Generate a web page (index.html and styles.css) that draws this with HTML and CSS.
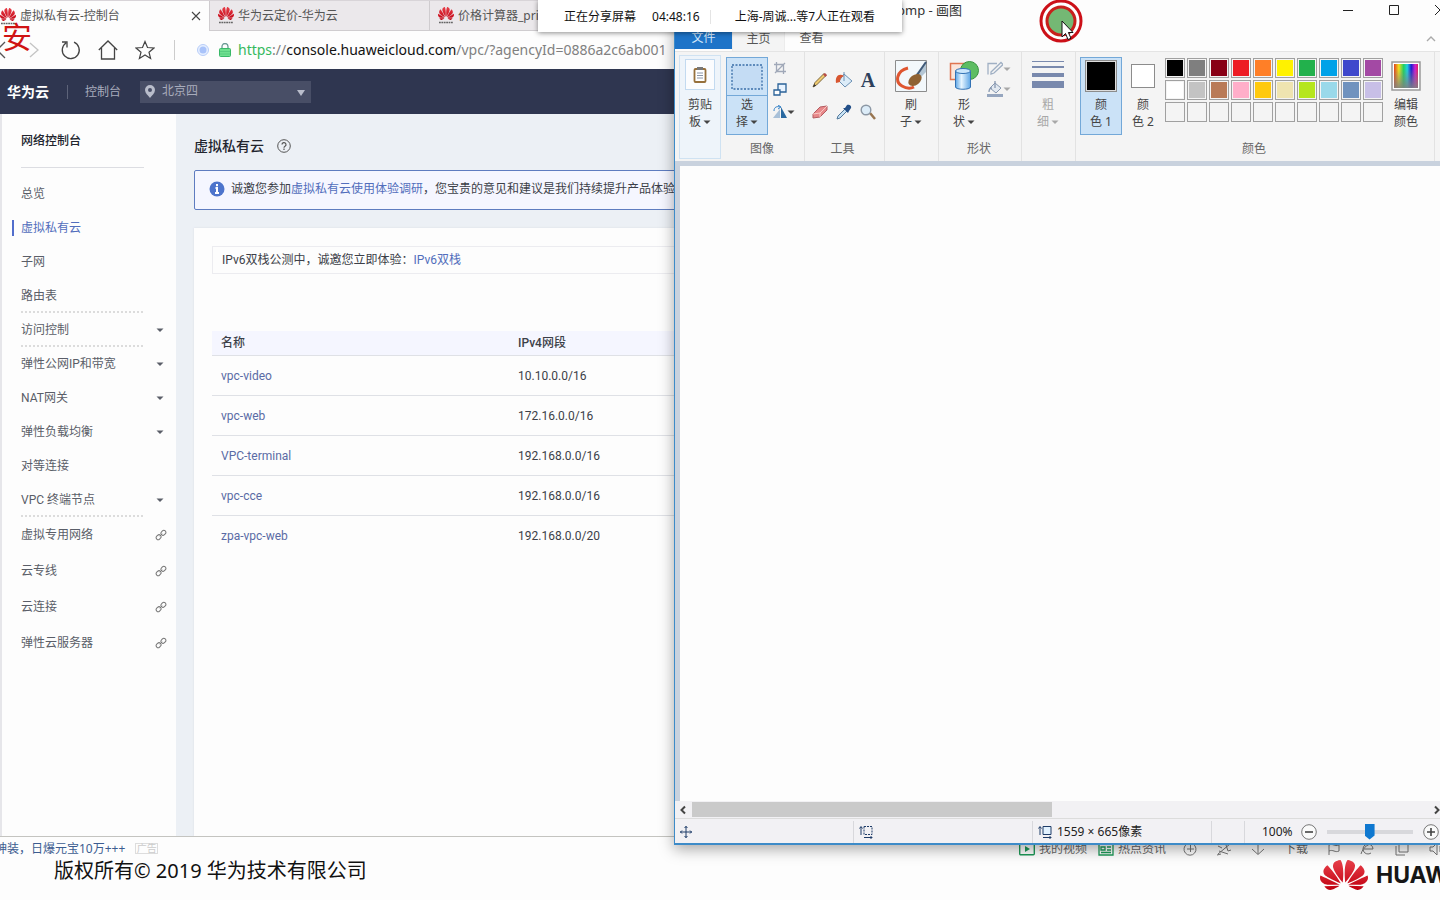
FILE: index.html
```html
<!DOCTYPE html>
<html lang="zh-CN">
<head>
<meta charset="utf-8">
<title>虚拟私有云-控制台</title>
<link rel="stylesheet" href="styles.css">
</head>
<body>
<svg class="defs" aria-hidden="true">
  <defs>
    <linearGradient id="red" x1="0" y1="0" x2="0" y2="1"><stop offset="0" stop-color="#e8404a"/><stop offset="1" stop-color="#c00010"/></linearGradient>
    <linearGradient id="rainbow"><stop offset="0" stop-color="#e04020"/><stop offset=".2" stop-color="#f0e020"/><stop offset=".4" stop-color="#20d060"/><stop offset=".55" stop-color="#20d0e0"/><stop offset=".72" stop-color="#2020d0"/><stop offset=".88" stop-color="#d020d0"/><stop offset="1" stop-color="#e02060"/></linearGradient>
    <linearGradient id="fade" x1="0" y1="0" x2="0" y2="1"><stop offset=".2" stop-color="#808080" stop-opacity="0"/><stop offset="1" stop-color="#808080" stop-opacity=".9"/></linearGradient>
    <linearGradient id="cyl"><stop offset="0" stop-color="#5ea6e6"/><stop offset=".4" stop-color="#e6f5ff"/><stop offset="1" stop-color="#5ea6e6"/></linearGradient>
    <symbol id="flower" viewBox="0 2.9 24 18.2" preserveAspectRatio="none">
      <path d="M3.67 6.14S1.82 7.91 1.72 9.78v.35c.08 1.51 1.22 2.4 1.22 2.4 1.83 1.79 6.26 4.04 7.3 4.55 0 0 .06.03.1-.01l.02-.04v-.04C7.52 10.8 3.67 6.14 3.67 6.14zM9.65 18.6c-.02-.08-.1-.08-.1-.08l-7.38.26c.8 1.43 2.15 2.53 3.56 2.2.96-.25 3.16-1.78 3.88-2.3.06-.05.04-.09.04-.09zm.08-.78C6.49 15.63.21 12.28.21 12.28c-.15.46-.2.9-.21 1.3v.07c0 1.07.4 1.82.4 1.82.8 1.69 2.34 2.2 2.34 2.2.7.3 1.4.31 1.4.31.12.02 4.4 0 5.54 0 .05 0 .08-.05.08-.05v-.06c0-.03-.03-.05-.03-.05zM9.06 3.19a3.42 3.42 0 00-2.57 3.15v.41c.03.6.16 1.05.16 1.05.66 2.9 3.86 7.65 4.55 8.65.05.05.1.03.1.03a.1.1 0 00.06-.1c1.06-10.6-1.11-13.42-1.11-13.42-.32.02-1.19.23-1.19.23zm8.3 2.27s-.49-1.8-2.44-2.28c0 0-.57-.14-1.17-.22 0 0-2.18 2.81-1.12 13.43.01.07.06.08.06.08.07.03.1-.03.1-.03.72-1.03 3.9-5.76 4.55-8.64 0 0 .36-1.4.02-2.34zm-2.92 13.07s-.07 0-.09.05c0 0-.01.07.03.1.7.51 2.85 2 3.88 2.3 0 0 .16.05.43.06h.14c.69-.02 1.9-.37 3-2.26l-7.4-.25zm7.83-8.41c.14-2.06-1.94-3.97-1.94-3.98 0 0-3.85 4.66-6.67 10.8 0 0-.03.08.02.13l.04.01h.06c1.06-.53 5.46-2.77 7.28-4.54 0 0 1.15-.93 1.21-2.42zm1.52 2.14s-6.28 3.37-9.52 5.55c0 0-.05.04-.03.11 0 0 .03.06.07.06 1.16 0 5.56 0 5.67-.02 0 0 .57-.02 1.27-.29 0 0 1.56-.5 2.37-2.27 0 0 .73-1.45.17-3.14z" fill="url(#red)"/>
    </symbol>
    <symbol id="favicon" viewBox="0 0 16 17">
      <use href="#flower" width="16" height="13"/>
      <path d="M1 15.500h14" stroke="#666" stroke-width="1.600" stroke-dasharray="1.800 .600"/>
    </symbol>
    <symbol id="down" viewBox="0 0 8 8"><path d="M.500 2.500h7L4 6z" fill="currentColor"/></symbol>
    <symbol id="link" viewBox="0 0 12 12"><g fill="none" stroke="#777" stroke-width="1"><rect x="-2.600" y="-2" width="5.200" height="4" rx="2" transform="translate(3.600 8.200) rotate(-45)"/><rect x="-2.600" y="-2" width="5.200" height="4" rx="2" transform="translate(8.400 3.800) rotate(-45)"/><path d="M4.800 7.200l2.400-2.400"/></g></symbol>
  </defs>
</svg>

<div class="browser">
  <div class="tabs">
    <div class="tab active"><svg class="fav"><use href="#favicon"/></svg><span>虚拟私有云-控制台</span>
      <button class="plain close" aria-label="关闭标签"><svg width="10" height="10" viewBox="0 0 10 10"><path d="M1 1l8 8M9 1L1 9" stroke="#444" stroke-width="1.100"/></svg></button></div>
    <div class="tab"><svg class="fav"><use href="#favicon"/></svg><span>华为云定价-华为云</span></div>
    <div class="tab"><svg class="fav"><use href="#favicon"/></svg><span>价格计算器_price</span></div>
  </div>
  <div class="toolbar">
    <button class="plain" aria-label="后退"><svg width="10" height="20" viewBox="0 0 10 20"><path d="M5 2L-3 10l8 8" fill="none" stroke="#555" stroke-width="1.300"/></svg></button>
    <button class="plain fwd" aria-label="前进"><svg width="12" height="20" viewBox="0 0 12 20"><path d="M2 3l8 7-8 7" fill="none" stroke="#c4c4c4" stroke-width="1.300"/></svg></button>
    <button class="plain" aria-label="刷新"><svg width="20" height="20" viewBox="0 0 20 20"><path d="M13 2.200A8.500 8.500 0 1 1 5 3M1 2h5v5.500" fill="none" stroke="#444" stroke-width="1.300"/></svg></button>
    <button class="plain" aria-label="主页"><svg width="20" height="20" viewBox="0 0 20 20"><path d="M.800 10L10 1l9.200 9M3.500 8v11h13V8" fill="none" stroke="#444" stroke-width="1.300"/></svg></button>
    <button class="plain" aria-label="收藏"><svg width="20" height="20" viewBox="0 0 20 20"><path d="M10 1.500l2.500 6 6.500.500-5 4.200 1.600 6.300L10 15l-5.600 3.500L6 12.200 1 8l6.500-.500z" fill="none" stroke="#444" stroke-width="1.200"/></svg></button>
    <span class="rule"></span>
    <svg class="site" width="12" height="12" viewBox="0 0 12 12"><circle cx="6" cy="6" r="5.500" fill="#e6efff" stroke="#b8cdf8"/><circle cx="6" cy="6" r="3.500" fill="#a9c3fa"/></svg>
    <svg class="lock" width="12" height="14" viewBox="0 0 12 14"><path d="M3 6V3.500a3 3 0 0 1 6 0V6" fill="none" stroke="#6a9a94" stroke-width="1.300"/><rect x=".5" y="5.500" width="11" height="8" rx="1" fill="#6fe08f" stroke="#38b868"/><path d="M1 8.500h10M1 11h10" stroke="#58cc80"/></svg>
    <div class="url"><span class="safe">https</span>://<b>console.huaweicloud.com</b>/vpc/?agencyId=0886a2c6ab001</div>
  </div>
  <header class="top">
    <a class="brand" href="#">华为云</a><span class="bar"></span><a href="#" class="console">控制台</a>
    <div class="region">
      <svg class="pin" width="10" height="13" viewBox="0 0 10 13"><path d="M5 0a5 5 0 0 1 5 5c0 3-3 5.500-5 8-2-2.500-5-5-5-8a5 5 0 0 1 5-5zm0 3a2 2 0 1 0 0 4 2 2 0 0 0 0-4z" fill="#b9bdcb"/></svg>
      <select aria-label="区域"><option>北京四</option></select>
      <svg class="tri" width="8" height="6" viewBox="0 0 8 6"><path d="M0 0h8L4 6z" fill="#b9bdcb"/></svg>
    </div>
  </header>
  <div class="body">
    <nav class="side">
      <h2>网络控制台</h2>
      <ul>
        <li><a href="#">总览</a></li>
        <li class="on"><a href="#">虚拟私有云</a></li>
        <li><a href="#">子网</a></li>
        <li class="dash"><a href="#">路由表</a></li>
        <li class="dash"><a href="#">访问控制</a><svg width="8" height="8"><use href="#down"/></svg></li>
        <li><a href="#">弹性公网IP和带宽</a><svg width="8" height="8"><use href="#down"/></svg></li>
        <li><a href="#">NAT网关</a><svg width="8" height="8"><use href="#down"/></svg></li>
        <li><a href="#">弹性负载均衡</a><svg width="8" height="8"><use href="#down"/></svg></li>
        <li><a href="#">对等连接</a></li>
        <li class="dash"><a href="#">VPC 终端节点</a><svg width="8" height="8"><use href="#down"/></svg></li>
      </ul>
      <ul class="ext">
        <li><a href="#">虚拟专用网络</a><svg width="12" height="12"><use href="#link"/></svg></li>
        <li><a href="#">云专线</a><svg width="12" height="12"><use href="#link"/></svg></li>
        <li><a href="#">云连接</a><svg width="12" height="12"><use href="#link"/></svg></li>
        <li><a href="#">弹性云服务器</a><svg width="12" height="12"><use href="#link"/></svg></li>
      </ul>
    </nav>
    <main>
      <h1>虚拟私有云 <svg width="14" height="14" viewBox="0 0 14 14"><circle cx="7" cy="7" r="6.300" fill="none" stroke="#555"/><path d="M5 5.600a2 2 0 1 1 3 1.700c-.700.400-1 .700-1 1.500M7 9.600v1.300" fill="none" stroke="#555" stroke-width="1.200"/></svg></h1>
      <div class="alert"><svg width="16" height="16" viewBox="0 0 16 16"><circle cx="8" cy="8" r="7.500" fill="#4d74cc"/><path d="M8 3v2.200M6.500 7H8v5M6 12h4" stroke="#fff" stroke-width="2" fill="none"/></svg><p>诚邀您参加<a href="#">虚拟私有云使用体验调研</a>，您宝贵的意见和建议是我们持续提升产品体验</p></div>
      <section class="card">
        <p class="notice">IPv6双栈公测中，诚邀您立即体验：<a href="#">IPv6双栈</a></p>
        <table>
          <thead><tr><th>名称</th><th>IPv4网段</th></tr></thead>
          <tbody>
            <tr><td><a href="#">vpc-video</a></td><td>10.10.0.0/16</td></tr>
            <tr><td><a href="#">vpc-web</a></td><td>172.16.0.0/16</td></tr>
            <tr><td><a href="#">VPC-terminal</a></td><td>192.168.0.0/16</td></tr>
            <tr><td><a href="#">vpc-cce</a></td><td>192.168.0.0/16</td></tr>
            <tr><td><a href="#">zpa-vpc-web</a></td><td>192.168.0.0/20</td></tr>
          </tbody>
        </table>
      </section>
    </main>
  </div>
  <div class="bstatus">
    <a class="ad" href="#">神装，日爆元宝10万+++</a><span class="adtag">广告</span>
    <div class="tools">
      <span class="feed"><svg width="16" height="14" viewBox="0 0 16 14"><rect x=".7" y=".7" width="14.600" height="12" rx="1" fill="none" stroke="#1e9a58" stroke-width="1.400"/><path d="M6 4l5 3-5 3z" fill="#1e9a58"/></svg>我的视频</span>
      <span class="feed news"><svg width="16" height="14" viewBox="0 0 16 14"><path d="M1 1h14v12H1zM3 5h4v3H3zM9 5h4M9 8h4M3 10.500h10" fill="none" stroke="#1e9a58" stroke-width="1.300"/></svg>热点资讯</span>
      <svg width="16" height="14" viewBox="0 0 16 14"><path d="M11 2a6 6 0 1 1-6 0M5 7h7M8.500 3v7" /></svg>
      <svg width="16" height="14" viewBox="0 0 16 14"><path d="M2 12L14 2M2 4l4 2M3 9l9 3M10 3l2 6 3-1M1 13l4-1"/></svg>
      <svg width="16" height="14" viewBox="0 0 16 14"><path d="M8 0v12M2 7l6 5.500L14 7"/></svg>
      <span>下载</span>
      <svg width="16" height="14" viewBox="0 0 16 14"><path d="M3 13V3c4-2 5 2 10 0v6c-4 2-6-2-10 0"/></svg>
      <svg width="16" height="14" viewBox="0 0 16 14"><path d="M4 7h9A5 5 0 1 0 11 11M1 12C3 5 9 1 14 2"/></svg>
      <svg width="16" height="14" viewBox="0 0 16 14"><path d="M5 1h9v9H5zM2 4v9h9"/></svg>
      <svg width="16" height="14" viewBox="0 0 16 14"><path d="M2 5h3l4-4v12L5 9H2zM12 4v6"/></svg>
    </div>
  </div>
  <footer>
    <p>版权所有© 2019 华为技术有限公司</p>
    <div class="huawei"><svg width="48" height="30"><use href="#flower" width="48" height="30"/></svg><span>HUAWEI</span></div>
  </footer>
</div>

<section class="paint">
  <div class="title"><span>bmp - 画图</span>
    <div class="win">
      <button class="plain" aria-label="最小化"><svg width="12" height="12" viewBox="0 0 12 12"><path d="M1 6.500h10" stroke="#222"/></svg></button>
      <button class="plain" aria-label="最大化"><svg width="12" height="12" viewBox="0 0 12 12"><path d="M1.500 1.500h9v9h-9z" fill="none" stroke="#222"/></svg></button>
      <button class="plain" aria-label="关闭"><svg width="12" height="12" viewBox="0 0 12 12"><path d="M1 1l10 10M11 1L1 11" stroke="#222"/></svg></button>
    </div>
  </div>
  <div class="ptabs">
    <button class="file">文件</button><button class="home">主页</button><button>查看</button>
    <svg class="fold" width="10" height="8" viewBox="0 0 10 8"><path d="M1 6l4-4 4 4" fill="none" stroke="#aaa" stroke-width="1.400"/></svg>
  </div>
  <div class="ribbon">
    <div class="group clip">
      <button class="big"><span class="pic board"><svg width="16" height="18" viewBox="0 0 16 18"><rect x="2.500" y="3" width="11" height="13" rx="1" fill="#fff" stroke="#96703c" stroke-width="1.800"/><path d="M5 1h6v3H5z" fill="#777"/><path d="M5 7h6M5 9.500h6M5 12h6" stroke="#8a96a8"/></svg></span><span>剪贴<br>板<svg width="8" height="8"><use href="#down"/></svg></span></button>
    </div>
    <div class="group image">
      <div class="tools-row">
        <button class="big pressed split"><span class="pic"><svg width="32" height="26" viewBox="0 0 32 26"><rect x="1" y="1" width="30" height="24" fill="#c4dcf4" stroke="#3a6ea8" stroke-width="1.300" stroke-dasharray="2 1.500"/></svg></span><span>选<br>择<svg width="8" height="8"><use href="#down"/></svg></span></button>
        <div class="minis">
          <button class="plain" aria-label="裁剪"><svg width="14" height="14" viewBox="0 0 14 14"><path d="M3.500 1v9.500H13M1 3.500h9.500V13M2 12L12 2" fill="none" stroke="#a0a8b8" stroke-width="1.300"/></svg></button>
          <button class="plain" aria-label="重新调整大小"><svg width="14" height="14" viewBox="0 0 14 14"><path d="M5 1h8v8H5z" fill="#e8f3ff" stroke="#2a6298" stroke-width="1.300"/><path d="M1 7h6v5H1z" fill="#fff" stroke="#2a6298" stroke-width="1.300"/></svg></button>
          <button class="plain" aria-label="旋转"><svg width="14" height="14" viewBox="0 0 14 14"><path d="M7 4v9H0z" fill="#a8c0d8"/><path d="M8 2l6 11H8z" fill="#2868a0"/><path d="M1 6c0-4 3-5 6-4M5 0l3 2-3 2" fill="none" stroke="#3080c8"/></svg><svg width="8" height="8"><use href="#down"/></svg></button>
        </div>
      </div>
      <h3>图像</h3>
    </div>
    <div class="group tool">
      <div class="grid">
        <button class="plain" aria-label="铅笔"><svg width="16" height="16" viewBox="0 0 16 16"><path d="M1 15l2-4.500L12 1.500l2 2-9.500 9.500z" fill="#f0cb70" stroke="#7d683e"/><path d="M1 15l1.300-3 1.800 1.800z" fill="#333"/><path d="M11 2.500l2.500 2.500 1.500-2L13 1z" fill="#b84d48"/></svg></button>
        <button class="plain" aria-label="填充"><svg width="18" height="18" viewBox="0 0 18 18"><path d="M9 3l8 7-7 6-6-6z" fill="#dcecf8" stroke="#6b90b4"/><path d="M9 10V1" stroke="#6b90b4"/><path d="M1 12C0 5 4 2 9 5 6 6 5 8 5 11z" fill="#d85630"/></svg></button>
        <button class="plain letter" aria-label="文本">A</button>
        <button class="plain" aria-label="橡皮擦"><svg width="16" height="14" viewBox="0 0 16 14"><path d="M1 9l7-7 7-1v4l-7 7-7 1z" fill="#e8888a" stroke="#b45c60"/><path d="M1 9l7-1 7-7M8 8v4" fill="none" stroke="#f9c8c4"/></svg></button>
        <button class="plain" aria-label="颜色选取器"><svg width="16" height="16" viewBox="0 0 16 16"><path d="M1 15l1-3 7-7 2 2-7 7z" fill="#c8e2f5" stroke="#52799c"/><path d="M7 4l5 5 1-2 2-3c1-2-2-4-4-3L9 4z" fill="#234f88"/></svg></button>
        <button class="plain" aria-label="放大镜"><svg width="16" height="16" viewBox="0 0 16 16"><path d="M10 9l5 6" stroke="#987550" stroke-width="2.500"/><circle cx="6" cy="6" r="4.800" fill="#dcecf8" stroke="#8c97a4" stroke-width="1.400"/></svg></button>
      </div>
      <h3>工具</h3>
    </div>
    <div class="group brush">
      <button class="big"><span class="pic"><svg width="32" height="32" viewBox="0 0 32 32"><path d="M.5.5h31v31H.5z" fill="#f3f8fb" stroke="#8c8c8c"/><path d="M13 8C1 11 0 22 7 26c5 3 8 3 12 1" fill="none" stroke="#df5630" stroke-width="3"/><path d="M31 1v11l-6 6-4-4z" fill="#b4c6d4"/><path d="M31 2L22 15" stroke="#415a78" stroke-width="2"/><ellipse cx="20" cy="20" rx="7.500" ry="5" transform="rotate(-38 20 20)" fill="#8f6232"/></svg></span><span>刷<br>子<svg width="8" height="8"><use href="#down"/></svg></span></button>
    </div>
    <div class="group shape">
      <div class="tools-row">
        <button class="big"><span class="pic"><svg width="32" height="32" viewBox="0 0 32 32"><path d="M2.500 3.500h16v16h-16z" fill="#fae5db" stroke="#df7550" stroke-width="1.500"/><circle cx="21.500" cy="10.500" r="9" fill="#5dbd62" stroke="#389440"/><path d="M7.500 11v16c0 3 15 3 15 0V11z" fill="url(#cyl)" stroke="#3372b4"/><ellipse cx="15" cy="11" rx="7.500" ry="2.500" fill="#cbe7fc" stroke="#3372b4"/></svg></span><span>形<br>状<svg width="8" height="8"><use href="#down"/></svg></span></button>
        <div class="minis dim">
          <button class="plain" aria-label="轮廓"><svg width="16" height="16" viewBox="0 0 16 16"><path d="M10 2.500H1v11M4 11L14 1.500l2 2-9 8.500-3 1z" fill="none" stroke="#a0b0c4" stroke-width="1.300"/></svg><svg width="8" height="8"><use href="#down"/></svg></button>
          <button class="plain" aria-label="形状填充"><svg width="16" height="16" viewBox="0 0 16 16"><path d="M8 2l6 5-5 5-6-5z" fill="#e1e8f0" stroke="#8798b0"/><path d="M8 7V0M2 11c0-3 1-4 3-4" fill="none" stroke="#8798b0" stroke-width="1.300"/><path d="M0 13h16v3H0z" fill="#96a6bf"/></svg><svg width="8" height="8"><use href="#down"/></svg></button>
        </div>
      </div>
      <h3>形状</h3>
    </div>
    <div class="group thick">
      <button class="big dim" disabled><span class="pic"><svg width="32" height="32" viewBox="0 0 32 32"><path d="M0 1h32v1H0zM0 6h32v2H0zM0 13h32v4H0zM0 21h32v7H0z" fill="#7989ad"/></svg></span><span>粗<br>细<svg width="8" height="8"><use href="#down"/></svg></span></button>
    </div>
    <div class="group colors">
      <div class="tools-row">
        <button class="big pressed"><span class="pic"><i class="chip c1"></i></span><span>颜<br>色 1</span></button>
        <button class="big"><span class="pic"><i class="chip c2"></i></span><span>颜<br>色 2</span></button>
        <div class="palette">
          <i style="background:#000"></i><i style="background:#7f7f7f"></i><i style="background:#880015"></i><i style="background:#ed1c24"></i><i style="background:#ff7f27"></i><i style="background:#fff200"></i><i style="background:#22b14c"></i><i style="background:#00a2e8"></i><i style="background:#3f48cc"></i><i style="background:#a349a4"></i>
          <i style="background:#fff"></i><i style="background:#c3c3c3"></i><i style="background:#b97a57"></i><i style="background:#ffaec9"></i><i style="background:#ffc90e"></i><i style="background:#efe4b0"></i><i style="background:#b5e61d"></i><i style="background:#99d9ea"></i><i style="background:#7092be"></i><i style="background:#c8bfe7"></i>
          <i></i><i></i><i></i><i></i><i></i><i></i><i></i><i></i><i></i><i></i>
        </div>
        <button class="big"><span class="pic"><svg width="30" height="30" viewBox="0 0 30 30"><path d="M1 1h28v28H1z" fill="#fff" stroke="#999" stroke-width="1.500"/><path d="M3 3h24v24H3z" fill="url(#rainbow)"/><path d="M3 3h24v24H3z" fill="url(#fade)"/></svg></span><span>编辑<br>颜色</span></button>
      </div>
      <h3>颜色</h3>
    </div>
  </div>
  <div class="canvas"></div>
  <div class="scroll"><svg width="17" height="10" viewBox="0 0 17 10"><path d="M10 1.500L6.500 5l3.500 3.500" fill="none" stroke="#444" stroke-width="2"/></svg><div class="thumb"></div><svg class="r" width="8" height="10" viewBox="0 0 8 10"><path d="M3 1.500L6.500 5 3 8.500" fill="none" stroke="#444" stroke-width="2"/></svg></div>
  <div class="pstatus">
    <div class="cell wide"><svg width="12" height="12" viewBox="0 0 12 12"><path d="M6 0v12M0 6h12M4.500 2L6 .500 7.500 2M4.500 10L6 11.500 7.500 10M2 4.500L.500 6 2 7.500M10 4.500L11.500 6 10 7.500" fill="none" stroke="#1f3c68"/></svg></div>
    <div class="cell wide"><svg width="14" height="14" viewBox="0 0 14 14"><path d="M2 10V2M.500 3.500L2 1.500l1.500 2M5 12.500h8M11.500 11l1.500 1.500-1.500 1.500" fill="none" stroke="#1f3c68"/><path d="M5 1.500h8v8H5z" fill="none" stroke="#1f3c68" stroke-dasharray="2 1"/></svg></div>
    <div class="cell wide"><svg width="14" height="14" viewBox="0 0 14 14"><path d="M2 10V2M.500 3.500L2 1.500l1.500 2M5 12.500h8M11.500 11l1.500 1.500-1.500 1.500" fill="none" stroke="#1f3c68"/><path d="M5 1.500h8v8H5z" fill="#e2f2ff" stroke="#1f3c68"/></svg><span>1559 × 665像素</span></div>
    <div class="cell gap"></div>
    <div class="zoom">
      <label for="z">100%</label>
      <button class="plain" aria-label="缩小"><svg width="16" height="16" viewBox="0 0 16 16"><circle cx="8" cy="8" r="7.300" fill="#fafafa" stroke="#777"/><path d="M4 8h8" stroke="#444" stroke-width="1.600"/></svg></button>
      <input id="z" type="range" min="0" max="100" value="50">
      <button class="plain" aria-label="放大"><svg width="16" height="16" viewBox="0 0 16 16"><circle cx="8" cy="8" r="7.300" fill="#fafafa" stroke="#777"/><path d="M4 8h8M8 4v8" stroke="#444" stroke-width="1.600"/></svg></button>
    </div>
  </div>
</section>

<div class="share"><span>正在分享屏幕</span><time>04:48:16</time><span class="bar"></span><span>上海-周诚...等7人正在观看</span></div>
<div class="stamp">安</div>
<svg class="pointer" width="44" height="44" viewBox="0 0 44 44"><circle cx="22" cy="22" r="20" fill="#fff" stroke="#cc1018" stroke-width="3"/><circle cx="22" cy="22" r="14" fill="#74b874" stroke="#c8201c" stroke-width="3"/><path d="M23 22v16l3.500-3.500 2.500 6 3-1.200-2.600-5.800H34z" fill="#fff" stroke="#111"/></svg>
</body>
</html>
```
FILE: styles.css
```css
* { box-sizing: border-box; }
body {
  margin: 0;
  position: relative;
  min-height: 100vh;
  overflow: hidden;
  background: #fdfdfd;
  color: #3c3f48;
  font: 12px/16px Roboto, "Noto Sans CJK SC", sans-serif;
}
h1, h2, h3, p, ul { margin: 0; padding: 0; font-size: 12px; font-weight: 400; }
ul { list-style: none; }
a { color: inherit; text-decoration: none; }
button { font: inherit; color: inherit; border: 0; background: none; padding: 0; }
svg { flex: none; }
.defs { position: absolute; width: 0; height: 0; }
.plain { display: inline-flex; align-items: center; justify-content: center; }

/* browser window */
.browser { display: flex; flex-direction: column; height: 100vh; }
.tabs { display: flex; height: 31px; background: #ebe8eb; border-top: 1px solid #d8d4d8; border-bottom: 1px solid #cfcccf; font-family: "Noto Sans", "Noto Sans CJK SC", sans-serif; }
.tab { display: flex; align-items: center; gap: 4px; width: 220px; padding: 0 8px; border-right: 1px solid #cfcccf; color: #555; white-space: nowrap; overflow: hidden; }
.tab.active { width: 210px; padding-left: 0; margin-bottom: -1px; background: #fdfdfd; }
.fav { width: 16px; height: 17px; }
.close { margin-left: auto; }
.toolbar { display: flex; align-items: center; height: 38px; gap: 17px; white-space: nowrap; }
.toolbar .fwd { margin: 0 4px 0 1px; }
.toolbar .rule { width: 1px; height: 20px; margin: 0 5px 0 2px; background: #ccc; }
.lock { margin-left: -7px; }
.url { margin-left: -10px; font: 14px/20px "Noto Sans", sans-serif; color: #808080; }
.url b { font-weight: 400; color: #111; }
.url .safe { color: #35b95e; }

.top { display: flex; align-items: center; height: 45px; padding-left: 7px; background: #2f3650; color: #a8acbc; }
.brand { font-size: 14px; font-weight: 700; color: #fff; }
.bar { width: 1px; height: 14px; background: #5d6379; }
.top .bar { margin: 0 17px 0 18px; }
.region { position: relative; margin-left: 19px; }
.region select { appearance: none; display: block; width: 171px; height: 22px; padding: 0 22px 2px; border: 0; border-radius: 0; background: #484e66; color: #a8acbc; font: inherit; }
.pin { position: absolute; left: 5px; top: 4px; }
.tri { position: absolute; right: 6px; top: 9px; }

.body { display: flex; flex: 1; min-height: 0; background: #ecf0f5; }
.side { width: 176px; border-left: 2px solid #e6e6ea; background: #fdfdfd; color: #5a5e68; }
.side h2 { width: 123px; margin: 0 0 8px 19px; padding: 19px 0 17px; line-height: 17px; font-weight: 500; color: #22252e; border-bottom: 1px solid #dcdde2; }
.side li { position: relative; display: flex; align-items: center; justify-content: space-between; height: 34px; padding: 2px 12px 0 19px; }
.side .ext li { height: 36px; padding-right: 9px; }
.side .dash::after { content: ""; position: absolute; left: 19px; width: 122px; bottom: -1px; border-top: 2px dotted #dcdcdc; }
.side .on { color: #526ebc; }
.side .on::before { content: ""; position: absolute; left: 10px; top: 10px; width: 2px; height: 16px; background: #526ecc; }
main { flex: 1; display: flex; flex-direction: column; padding: 24px 18px 0; }
h1 { display: flex; align-items: center; gap: 13px; font-size: 14px; font-weight: 500; color: #22252e; line-height: 16px; }
.alert { display: flex; align-items: center; gap: 6px; height: 40px; margin: 16px 0 18px; padding: 0 14px 2px; border: 1px solid #5e7cc0; border-radius: 2px; background: #f5f6ff; white-space: nowrap; }
.alert a, .notice a { color: #526ebc; }
td a { color: #5a6ba5; }
.card { flex: 1; padding: 18px; background: #fdfdfd; box-shadow: 0 0 2px #d8dbe4; }
.notice { padding: 5px 9px; border: 1px solid #ececf0; }
table { width: 100%; margin-top: 57px; border-spacing: 0; table-layout: fixed; text-align: left; }
th { height: 25px; padding: 0 9px; font-weight: 500; background: #f5f6ff; border-bottom: 1px solid #dfe1e6; }
th:first-child { width: 297px; }
td { height: 40px; padding: 0 9px; border-bottom: 1px solid #dfe1e6; }
tr:last-child td { border-bottom: 0; }

.bstatus { display: flex; align-items: center; height: 24px; border-top: 1px solid #c4c4c0; background: #fdfdfd; white-space: nowrap; }
.ad { margin-left: -5px; color: #3c5c90; font-family: "Noto Sans", "Noto Sans CJK SC", sans-serif; }
.adtag { margin-left: 10px; width: 23px; height: 11px; border: 1px solid #ddd; color: #ccc; font-size: 10px; line-height: 9px; text-align: center; }
.tools { display: flex; align-items: center; gap: 18px; margin: 0 -4px 0 auto; color: #666; }
.tools > svg { fill: none; stroke: #777; }
.feed { display: flex; align-items: center; gap: 4px; }
.news { margin: 0 -2px 0 -7px; }
footer { display: flex; align-items: flex-start; justify-content: space-between; height: 40px; padding-left: 54px; }
footer p { font: 20px/22px "Noto Sans", "Noto Sans CJK SC", sans-serif; color: #111; white-space: nowrap; }
.huawei { display: flex; align-items: center; gap: 8px; width: 120px; font: 700 23px/30px Inter, sans-serif; color: #161616; }

/* paint window */
.paint { position: absolute; left: 674px; right: 0; top: 0; bottom: 55px; display: flex; flex-direction: column; overflow: hidden; background: #fdfdfd; border: solid #3d8bc8; border-width: 0 0 2px 1px; box-shadow: 0 4px 14px rgba(0, 0, 0, .35); font-family: "Noto Sans", "Noto Sans CJK SC", sans-serif; }
.title { display: flex; align-items: center; height: 20px; padding-left: 222px; font-size: 13px; color: #333; }
.win { display: flex; margin: 0 -23px 0 auto; }
.win button { width: 46px; }
.ptabs { display: flex; align-items: flex-end; height: 31px; color: #555; }
.ptabs button { width: 53px; height: 26px; }
.ptabs .file { width: 57px; height: 23px; margin-bottom: 2px; background: #1e74c8; color: #d4e8fa; }
.ptabs .home { background: #f4f4f4; border: 1px solid #ececec; border-bottom: 0; }
.fold { margin: 0 4px 8px auto; }
.ribbon { display: flex; height: 110px; border-top: 1px solid #e4e4e4; background: #f4f4f4; color: #444; white-space: nowrap; }
.group { display: flex; flex-direction: column; padding-top: 5px; flex: none; border-right: 1px solid #e2e2e2; }
.group h3 { margin-top: auto; padding-bottom: 4px; text-align: center; color: #666; }
.group.clip { width: 42px; margin: 3px 0 2px 4px; padding-top: 1px; border: 1px solid #cfe2f2; background: #eef4fa; }
.image { width: 84px; padding-left: 5px; }
.tool { width: 80px; }
.tool h3 { padding-right: 4px; }
.brush { width: 54px; padding-left: 5px; }
.shape { width: 83px; padding-left: 4px; }
.image h3, .shape h3, .colors h3 { padding-right: 6px; }
.thick { width: 54px; padding-left: 5px; }
.colors { width: 359px; padding-left: 4px; }
.tools-row { display: flex; }
.big { display: flex; flex-direction: column; width: 42px; height: 78px; align-items: center; line-height: 17px; border: 1px solid transparent; }
.big .pic { display: flex; align-items: center; justify-content: center; height: 35px; margin-bottom: 3px; }
.big span > br ~ svg { margin-left: 2px; }
.big.pressed { background: #cbe2f7; border-color: #73a8d8; }
.big.split .pic { align-self: stretch; height: 38px; margin-bottom: 0; border-bottom: 1px solid #73a8d8; }
.group.clip .big { width: 40px; }
.board { width: 30px; border: 1px solid #c3daf0; background: #fbfcfe; }
.group.clip .pic { height: 31px; margin: 1px 0 6px; }
.dim { color: #a8a8a8; }
.minis { display: flex; flex-direction: column; align-items: flex-start; gap: 8px; padding: 4px 0 0 5px; }
.shape .minis { gap: 4px; padding-left: 2px; }
.grid { display: grid; grid-template-columns: repeat(3, 24px); gap: 10px 0; justify-content: center; padding: 12px 1px 0 0; align-items: center; }
.grid button { height: 22px; }
.letter { font: 700 20px/22px "Liberation Serif", serif; color: #2d405c; }
.chip { width: 32px; height: 32px; border: 1px solid #8c8c8c; background: #000; box-shadow: inset 0 0 0 1px #ddd; }
.chip.c2 { width: 24px; height: 24px; background: #fff; box-shadow: none; }
.palette { display: grid; grid-template-columns: repeat(10, 20px); grid-auto-rows: 20px; gap: 2px; padding: 1px 2px 0 1px; }
.palette i { border: 1px solid #a0a0a0; box-shadow: inset 0 0 0 1px #f4f4f4; }
.canvas { flex: 1; border: solid #c9d2de; border-width: 5px 0 0 5px; background: #fdfdfd; }
.scroll { display: flex; align-items: center; height: 17px; background: #f2f1f4; }
.thumb { width: 47%; height: 15px; background: #cacaca; }
.scroll .r { margin-left: auto; }
.pstatus { display: flex; align-items: center; height: 25px; padding-top: 1px; border-top: 1px solid #dcdcdc; background: #f2f1f4; color: #222; white-space: nowrap; }
.cell { display: flex; align-items: center; gap: 5px; height: 22px; padding-left: 5px; border-right: 1px solid #d8d8dc; }
.wide { width: 179px; }
.gap { width: 33px; }
.zoom { display: flex; align-items: center; gap: 8px; margin-left: 17px; }
.zoom input { appearance: none; width: 86px; height: 18px; margin: 0 2px; background: linear-gradient(#d8d8dc, #d8d8dc) center / 100% 4px no-repeat; }
.zoom input::-webkit-slider-thumb { appearance: none; width: 10px; height: 16px; background: #0f78d0; clip-path: polygon(0 0, 100% 0, 100% 75%, 50% 100%, 0 75%); }

/* overlays */
.share { position: absolute; top: 0; left: 50%; transform: translateX(-50%); display: flex; align-items: center; width: 364px; height: 32px; padding: 1px 26px 0; background: #fff; box-shadow: 0 1px 5px rgba(0, 0, 0, .45); color: #111; white-space: nowrap; font-family: "Noto Sans", "Noto Sans CJK SC", sans-serif; }
.share time { margin-left: 16px; }
.share .bar { margin: 0 24px 0 10px; background: #e4e4e4; }
.stamp { position: absolute; left: 2px; top: 23px; font-size: 30px; line-height: 30px; color: #d01414; }
.pointer { position: absolute; left: 1039px; top: -1px; }
```
